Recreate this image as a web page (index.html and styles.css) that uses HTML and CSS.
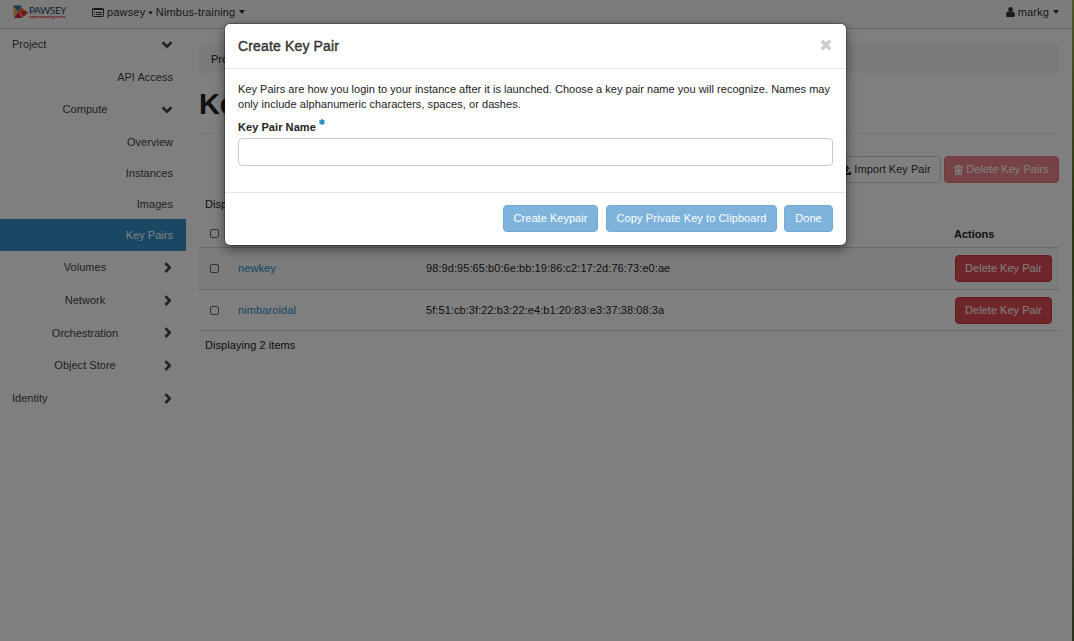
FILE: index.html
```html
<!DOCTYPE html>
<html lang="en">
<head>
<meta charset="utf-8">
<title>Key Pairs</title>
<link rel="stylesheet" href="styles.css">
</head>
<body>
<svg class="defs" width="0" height="0">
  <symbol id="down" viewBox="0 0 12 8"><path d="M1.600 1.300 6 5.600 10.400 1.300" fill="none" stroke="currentColor" stroke-width="2.600"/></symbol>
  <symbol id="right" viewBox="0 0 8 12"><path d="M1.400 1.200 5.700 5.600 1.400 10" fill="none" stroke="currentColor" stroke-width="2.600"/></symbol>
</svg>
<div class="page">
  <header class="navbar">
    <a class="brand">
      <svg class="mark" width="15" height="14" viewBox="0 0 15 14"><path d="M0 .5h9L5 7z" fill="#257f96"/><path d="M0 1.500 5 7 1 12z" fill="#f5a855"/><path d="M8 2.500 15 7.500 10 12 5 7z" fill="#f0602e"/><path d="M5 7 9.500 13H1z" fill="#d91f3c"/><path d="M9 6 15 7.500 10 12z" fill="#dc2b3b"/></svg>
      <span class="logo"><span class="logo-name">PAWSEY</span><span class="logo-sub">supercomputing centre</span></span>
    </a>
    <a class="context">
      <svg width="12" height="9" viewBox="0 0 12 9"><rect x=".5" y=".5" width="11" height="8" rx=".8" fill="none" stroke="currentColor"/><path d="M0 1.500h12M2 4.500h1M4 4.500h6M2 6.500h1M4 6.500h6" stroke="currentColor"/></svg>
      <span class="context-name">pawsey • Nimbus-training</span><i class="caret"></i>
    </a>
    <a class="user">
      <svg width="9" height="10" viewBox="0 0 9 10"><path d="M4.500 0C6 0 6.900 1.100 6.800 2.600S5.900 5.400 4.500 5.400 2.300 4.100 2.200 2.600 3 0 4.500 0ZM2 4.600c1.300 1.200 3.700 1.200 5 0C8.500 5 9 7 8.800 8.800 8.700 9.600 8.200 10 7.500 10h-6C.8 10 .3 9.600.2 8.800 0 7 .5 5 2 4.600Z" fill="currentColor"/></svg>
      <span class="user-name">markg</span><i class="caret"></i>
    </a>
  </header>
  <div class="columns">
    <nav class="sidebar">
      <a class="item top first"><span>Project</span><svg class="down"><use href="#down"/></svg></a>
      <a class="item leaf tall"><span>API Access</span></a>
      <a class="item group tall"><span>Compute</span><svg class="down"><use href="#down"/></svg></a>
      <a class="item leaf"><span>Overview</span></a>
      <a class="item leaf"><span>Instances</span></a>
      <a class="item leaf"><span>Images</span></a>
      <a class="item leaf active"><span>Key Pairs</span></a>
      <a class="item group tall"><span>Volumes</span><svg class="right"><use href="#right"/></svg></a>
      <a class="item group tall"><span>Network</span><svg class="right"><use href="#right"/></svg></a>
      <a class="item group mid"><span>Orchestration</span><svg class="right"><use href="#right"/></svg></a>
      <a class="item group tall"><span>Object Store</span><svg class="right"><use href="#right"/></svg></a>
      <a class="item top tall"><span>Identity</span><svg class="right"><use href="#right"/></svg></a>
    </nav>
    <main class="content">
      <div class="breadcrumb">Project</div>
      <h1>Key Pairs</h1>
      <div class="actions">
        <button class="btn plain"><svg width="9" height="10" viewBox="0 0 9 10"><path d="M4.500 0 8 3.700H5.700V7H3.300V3.700H1zM0 7h2v1h5V7h2v3H0z" fill="currentColor"/></svg><span>Import Key Pair</span></button>
        <button class="btn danger faded"><svg width="9" height="10" viewBox="0 0 9 10"><path d="M0 2h9M3 1.800V.5h3v1.300M1.500 2.500v6.100q0 .9.900.9h4.200q.9 0 .9-.9V2.500M3.200 3.500v5M4.500 3.500v5M5.800 3.500v5" fill="none" stroke="currentColor" stroke-width="1.100"/></svg><span>Delete Key Pairs</span></button>
      </div>
      <div class="count">Displaying 2 items</div>
      <div class="row head"><i class="check"></i><b></b><b></b><b class="act">Actions</b></div>
      <div class="row striped"><i class="check"></i><a class="link">newkey</a><span class="print">98:9d:95:65:b0:6e:bb:19:86:c2:17:2d:76:73:e0:ae</span><button class="btn danger">Delete Key Pair</button></div>
      <div class="row last"><i class="check"></i><a class="link">nimbaroidal</a><span class="print">5f:51:cb:3f:22:b3:22:e4:b1:20:83:e3:37:38:08:3a</span><button class="btn danger">Delete Key Pair</button></div>
      <div class="count bottom">Displaying 2 items</div>
    </main>
  </div>
</div>
<div class="edge"></div>
<div class="backdrop">
  <section class="modal">
    <div class="modal-head"><h2>Create Key Pair</h2><svg width="12" height="12" viewBox="0 0 12 12"><path d="M1.700 1.700 10.300 10.300M10.300 1.700 1.700 10.300" stroke="#ccc" stroke-width="3.400"/></svg></div>
    <div class="modal-body">
      <p>Key Pairs are how you login to your instance after it is launched. Choose a key pair name you will recognize. Names may<br><span class="line2">only include alphanumeric characters, spaces, or dashes.</span></p>
      <label>Key Pair Name <svg width="6" height="6" viewBox="0 0 6 6"><path d="M3 0v6M.4 1.500l5.200 3M.4 4.500l5.200-3" stroke="#2b8fcf" stroke-width="1.500"/></svg></label>
      <input type="text">
    </div>
    <div class="modal-foot"><button class="btn primary create">Create Keypair</button><button class="btn primary copy">Copy Private Key to Clipboard</button><button class="btn primary done">Done</button></div>
  </section>
</div>
</body>
</html>
```
FILE: styles.css
```css
* { box-sizing: border-box; }
body {
  margin: 0;
  height: 641px;
  overflow: hidden;
  background: #fff;
  color: #222;
  font: 11px/15px "Liberation Sans", Arial, sans-serif;
  letter-spacing: .022px;
}
.defs { position: absolute; }
svg { flex: none; display: block; }
.page { width: 1072px; height: 641px; }
.navbar {
  height: 29px;
  display: flex;
  align-items: center;
  padding: 0 13px 4px 13px;
  background: #f8f8f8;
  border-bottom: 1px solid #d0d0d0;
  color: #333;
}
.brand { display: flex; width: 79px; gap: 1px; align-items: center; }
.logo { display: flex; flex-direction: column; }
.logo-name { font: 10px/9px Lato, sans-serif; color: #204967; letter-spacing: -.4px; }
.logo-sub { font: bold 4px/4px Lato, sans-serif; color: #e23b4b; letter-spacing: -.23px; white-space: nowrap; }
.context, .user { display: flex; align-items: center; }
.context-name { margin: 0 4px 0 3px; letter-spacing: .17px; }
.user { margin-left: auto; }
.user-name { margin: 0 4px 0 3px; letter-spacing: .15px; }
.caret { border: 3.5px solid transparent; border-top: 4px solid #333; border-bottom: 0; }
.columns { display: flex; }
.sidebar { width: 186px; color: #444; }
.item { display: flex; align-items: center; height: 31px; padding: 0 13px 0 12px; }
.leaf { padding-top: 1.500px; }
.item.tall { height: 33px; }
.item.mid { height: 32px; }
.item.active { height: 32px; padding-top: 0; background: #348ec9; color: #fff; }
.top { justify-content: space-between; }
.leaf { justify-content: flex-end; }
.group { padding-left: 0; }
.group span { width: 170px; text-align: center; flex: none; }
.group svg { margin-left: -9px; }
.down { width: 12px; height: 8px; }
.right { width: 8px; height: 12px; }
.group .right { margin-left: -6px; }
.top .right { margin-right: 1px; }
.content { width: 860px; margin-left: 13px; padding-top: 15px; }
.breadcrumb { height: 29px; padding: 8px 12px 6px; background: #f5f5f5; border-radius: 4px; }
h1 {
  margin: 0;
  height: 61px;
  padding-top: 14px;
  border-bottom: 1px solid #eee;
  font-size: 29px;
  line-height: 34px;
  letter-spacing: -.3px;
}
.actions { display: flex; justify-content: flex-end; gap: 3px; padding-top: 22px; }
.btn {
  height: 27px;
  padding: 0;
  border: 1px solid;
  border-radius: 4px;
  font: inherit;
  letter-spacing: .03px;
  color: #fff;
  display: flex;
  align-items: center;
  justify-content: center;
  gap: 3px;
  white-space: nowrap;
}
.plain { width: 108px; background: #fff; border-color: #ccc; color: #333; padding-right: 1px; }
.danger { width: 97px; background: #dd4c55; border-color: #d0323f; }
.danger.faded { width: 115px; background: #ec858d; border-color: #e4747c; }
.count { height: 37px; padding: 14px 6px 0; letter-spacing: .06px; }
.count.bottom { padding-top: 7px; }
.row {
  display: grid;
  grid-template-columns: 39px 188px 1fr 104px;
  align-items: center;
  height: 42px;
  border-bottom: 1px solid #d5d5d5;
}
.row.head { height: 28px; }
.row.last { height: 41px; }
.act { padding-top: 1px; margin-left: -1px; }
.print { letter-spacing: .07px; }
.striped { background: #f9f9f9; }
.check { width: 9px; height: 9px; margin-left: 11px; border: 1px solid #666; border-radius: 2px; }
.link { color: #258acb; letter-spacing: .1px; }
.edge { position: absolute; top: 0; right: 0; width: 2px; height: 641px; background: linear-gradient(#9fab4c, #546b28 35%, #78814d 70%, #53633a); }
.backdrop { position: absolute; inset: 0; background: rgba(0, 0, 0, .5); padding: 24px 0 0 225px; }
.modal { width: 621px; height: 221px; background: #fff; border-radius: 5px; box-shadow: 0 0 0 1px rgba(0,0,0,.25), 0 4px 12px rgba(0,0,0,.5); }
.modal-head { height: 45px; padding: 0 14px 3px 13px; border-bottom: 1px solid #e5e5e5; display: flex; justify-content: space-between; align-items: center; }
h2 { margin: 0; padding-top: 2px; font-size: 14px; line-height: 18px; font-weight: 400; letter-spacing: .15px; -webkit-text-stroke: .4px #333; color: #333; }
.modal-body { height: 124px; padding: 13px 13px 0; border-bottom: 1px solid #e5e5e5; }
p { margin: 0; white-space: nowrap; }
.line2 { letter-spacing: .05px; }
label { display: flex; gap: 3px; height: 27px; padding-top: 8px; font-weight: 700; letter-spacing: .06px; }
label svg { margin-top: -1px; }
input { display: block; width: 595px; height: 28px; margin-top: -1px; border: 1px solid #ccc; border-radius: 4px; }
.modal-foot { display: flex; justify-content: flex-end; padding: 12px 13px; }
.primary { background: #7eb4db; border-color: #70aad5; }
.create { width: 95px; margin-right: 8px; }
.copy { width: 171px; margin-right: 7px; letter-spacing: .09px; }
.done { width: 49px; }
```
